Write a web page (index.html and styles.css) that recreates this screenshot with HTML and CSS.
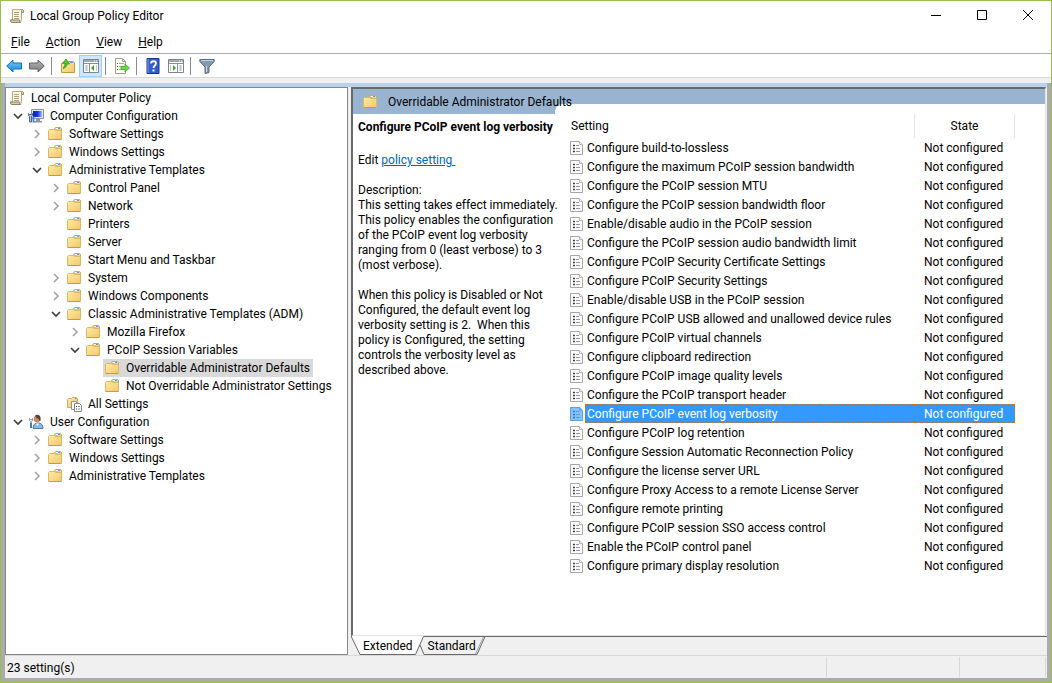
FILE: index.html
```html
<!DOCTYPE html>
<html lang="en">
<head>
<meta charset="utf-8">
<title>Local Group Policy Editor</title>
<link rel="stylesheet" href="styles.css">
</head>
<body>
<svg class="sprites" aria-hidden="true">
  <defs>
    <linearGradient id="gold" x1="0" y1="0" x2="1" y2="1"><stop offset="0" stop-color="#ffeaa6"/><stop offset="1" stop-color="#f0c968"/></linearGradient>
    <linearGradient id="blue" x1="0" y1="0" x2="0" y2="1"><stop offset="0" stop-color="#6fd0fa"/><stop offset="1" stop-color="#1287d8"/></linearGradient>
    <linearGradient id="grey" x1="0" y1="0" x2="0" y2="1"><stop offset="0" stop-color="#b4b4b4"/><stop offset="1" stop-color="#7c7c7c"/></linearGradient>
    <linearGradient id="screen" x1="0" y1="0" x2="1" y2="0"><stop offset="0" stop-color="#0a22b8"/><stop offset=".5" stop-color="#1530e0"/><stop offset="1" stop-color="#9cbcf8"/></linearGradient>
    <symbol id="folder" viewBox="0 0 16 16">
      <path d="M7.500 3.500V2.500l1-1h5l1 1v3z" fill="#f3d27d" stroke="#d0a850"/>
      <path d="M9 2.500h4" stroke="#fff"/><path d="M11 2.500h2" stroke="#4d9be6"/>
      <path d="M1.500 4.500l1-1h5l1 1h6v9h-13z" fill="url(#gold)" stroke="#dcb865"/>
      <path d="M2 13.500h12" stroke="#c69a45"/>
    </symbol>
    <symbol id="scroll" viewBox="0 0 16 16">
      <path d="M3.500 1.500h10l1 1v2h-2v7l-1 3H2.500l-1-1v-1.500h2z" fill="#fbf5dc" stroke="#b5aa86"/>
      <path d="M12.500 4.500V2.500l1-1 1 1v2z" fill="#d9cda4" stroke="#9c9171"/>
      <path d="M1.500 12h9v1.500l1 1H3l-1.500-1z" fill="#d8cda8" stroke="#8f8564"/>
      <path d="M5 4.500h5M5 6.500h5M5 8.500h5M5 10.500h5" stroke="#a7a08a"/>
    </symbol>
    <symbol id="computer" viewBox="0 0 16 16">
      <path d="M3.500 1.500h12v9h-12z" fill="#e3e7ef" stroke="#8691a6"/>
      <path d="M5 3h9v6H5z" fill="url(#screen)"/>
      <path d="M8 11h4v2H8zM6 13h8v1.500H6z" fill="#8b93a1"/>
      <path d="M.5 5.500v2l1 1v5.500h2V8.500l1-1v-2l-1 1h-2z" fill="#a9c8e4" stroke="#4a6788"/>
      <path d="M5.500 8.500v6" stroke="#4e83c2" stroke-width="2"/>
    </symbol>
    <symbol id="user" viewBox="0 0 16 16">
      <path d="M5 14.500c0-4 2-5.500 5-5.500s5 1.500 5 5.500z" fill="#8db7e2" stroke="#4b7bab"/>
      <circle cx="9" cy="5" r="3.300" fill="#c58b68"/>
      <path d="M7 2c1-2 5-2 5.500 1.500V7C11 7.500 11 4 9 4z" fill="#594033"/>
      <path d="M8 9.500l1.500 2.500 1.500-2.500z" fill="#fff"/>
      <path d="M1.500 4.500v2l1 1v1h1v-1l1-1v-2l-1 1h-1z" fill="#e4eef7" stroke="#6f8193" stroke-width=".8"/>
      <path d="M3 9v5" stroke="#477fb8" stroke-width="2"/>
    </symbol>
    <symbol id="all" viewBox="0 0 16 16">
      <path d="M1.500 3.500l1-1h3l1-1h4l1 1v9h-10z" fill="url(#gold)" stroke="#d5ad58"/>
      <path d="M9 2.500h1.500" stroke="#4d9be6"/>
      <path d="M5.500 5.500h5v8h-5z" fill="#fff" stroke="#909090"/>
      <path d="M8.500 7.500h5l2 2v6h-7z" fill="#fff" stroke="#858585"/>
      <path d="M10 10.500h1M10 13h1" stroke="#333"/><path d="M12 10.500h2M12 13h2" stroke="#8d89b0"/>
    </symbol>
    <symbol id="policy" viewBox="0 0 14 16">
      <path d="M.5 1.500h9l3 3v10H.5z" fill="#fff" stroke="#a8a8a8"/>
      <path d="M9.500 1.500v3h3" fill="#f0f0f0" stroke="#b8b8b8"/>
      <path d="M3 5.500h2M3 8.500h2M3 11.500h2" stroke="#38384e" stroke-width="1.500"/>
      <path d="M6 5.500h3M6 8.500h4M6 11.500h4" stroke="#9693b5"/>
    </symbol>
    <symbol id="open" viewBox="0 0 10 10"><path d="M1 3l4 4 4-4" fill="none" stroke="#404040" stroke-width="1.700"/></symbol>
    <symbol id="closed" viewBox="0 0 10 10"><path d="M3 1l4 4-4 4" fill="none" stroke="#a0a0a0" stroke-width="1.500"/></symbol>
  </defs>
</svg>

<div class="window">
  <header class="titlebar">
    <svg class="icon"><use href="#scroll"/></svg>
    <h1 class="title">Local Group Policy Editor</h1>
    <div class="caption-buttons">
      <button class="caption" aria-label="Minimize"><svg class="glyph" viewBox="0 0 11 11"><path d="M0 5.500h10"/></svg></button>
      <button class="caption" aria-label="Maximize"><svg class="glyph" viewBox="0 0 11 11"><path d="M.5.5h9v9H.5z"/></svg></button>
      <button class="caption" aria-label="Close"><svg class="glyph" viewBox="0 0 11 11"><path d="M0 0l10 10M10 0L0 10"/></svg></button>
    </div>
  </header>

  <nav class="menubar">
    <button class="menu"><u>F</u>ile</button>
    <button class="menu"><u>A</u>ction</button>
    <button class="menu"><u>V</u>iew</button>
    <button class="menu"><u>H</u>elp</button>
  </nav>

  <div class="toolbar" role="toolbar">
    <button class="tool" aria-label="Back"><svg class="icon" viewBox="0 0 16 16"><path d="M.7 8L7 2v3h8.500v6H7v3z" fill="url(#blue)" stroke="#1b6eb0"/></svg></button>
    <button class="tool" aria-label="Forward"><svg class="icon" viewBox="0 0 16 16"><path d="M15.300 8L9 2v3H.5v6H9v3z" fill="url(#grey)" stroke="#626262"/></svg></button>
    <span class="divider"></span>
    <button class="tool" aria-label="Up one level"><svg class="icon" viewBox="0 0 16 16"><path d="M1.500 5.500l1-1h5l1-1h5l1 1v10h-13z" fill="url(#gold)" stroke="#c19a45"/><path d="M10 4.500h3" stroke="#4d9be6"/><path d="M3 10.500C6 9.500 7 8 7 6h2.500L6 1 2.500 5.500H5c0 2-1 3-2 5z" fill="#51c432" stroke="#2f8d1c" stroke-width=".7"/></svg></button>
    <button class="tool tool-active" aria-label="Show or hide console tree" aria-pressed="true"><svg class="icon" viewBox="0 0 16 16"><path d="M.5 1.500h15v13H.5z" fill="#fff" stroke="#7d8490"/><path d="M1 2h14v2H1z" fill="#a0a6b0"/><path d="M11 3h1M13 3h1" stroke="#fff"/><path d="M1 5.500h14M6.500 6v8.500" stroke="#8a909b"/><path d="M2.500 8h2M2.500 10h2M2.500 12h2M13 8h1M13 10h1M13 12h1" stroke="#7b86a2"/><path d="M11 7v6l-3-3z" fill="#36a91f"/></svg></button>
    <span class="divider"></span>
    <button class="tool" aria-label="Export list"><svg class="icon" viewBox="0 0 16 16"><path d="M1.500.5h7l3 3v12h-10z" fill="#fffef1" stroke="#a29d8b"/><path d="M8.500.5v3h3" fill="none" stroke="#a29d8b"/><path d="M3 5.500h1M3 8.500h1M3 11.500h1" stroke="#444"/><path d="M5 5.500h5M5 8.500h4M5 11.500h4" stroke="#aaa7be"/><path d="M7 8.500h4V6l4.500 4-4.500 4v-2.500H7z" fill="#6ad848" stroke="#46a62b" stroke-width=".8"/></svg></button>
    <span class="divider"></span>
    <button class="tool" aria-label="Help"><svg class="icon" viewBox="0 0 16 16"><path d="M2 .5h12v15H2z" fill="#315bd0" stroke="#183788"/><path d="M3 1v14" stroke="#7a9cf0"/><path d="M6 5.500c0-3 5-3 5 0 0 2-2.500 2-2.500 4.500" fill="none" stroke="#fff" stroke-width="1.800"/><path d="M7.500 11.500h2v2h-2z" fill="#fff"/></svg></button>
    <button class="tool" aria-label="Show or hide action pane"><svg class="icon" viewBox="0 0 16 16"><path d="M.5 1.500h15v13H.5z" fill="#fff" stroke="#7d8490"/><path d="M1 2h14v2H1z" fill="#a0a6b0"/><path d="M11 3h1M13 3h1" stroke="#fff"/><path d="M1 5.500h14M9.500 6v8.500" stroke="#8a909b"/><path d="M2 8h1M2 10h1M2 12h1M11.500 8h2M11.500 10h2M11.500 12h2" stroke="#7b86a2"/><path d="M5 7v6l3-3z" fill="#36a91f"/></svg></button>
    <span class="divider"></span>
    <button class="tool" aria-label="Filter"><svg class="icon" viewBox="0 0 16 16"><path d="M.8 1.500h14.400v2L10 9v5.500l-4 1V9L.8 3.500z" fill="#8699ad" stroke="#536a80"/><path d="M2 2.500h12" stroke="#c7d4df"/><path d="M7.500 8v6" stroke="#d0dce5"/></svg></button>
  </div>

  <div class="frame">
    <main class="panes">
      <nav class="tree" aria-label="Console tree">
        <ul class="branch">
          <li><div class="node root"><svg class="icon"><use href="#scroll"/></svg><span class="label">Local Computer Policy</span></div></li>
          <li>
            <div class="node"><button class="twisty" aria-label="Collapse"><svg><use href="#open"/></svg></button><svg class="icon"><use href="#computer"/></svg><span class="label">Computer Configuration</span></div>
            <ul class="branch nested">
              <li><div class="node"><button class="twisty" aria-label="Expand"><svg><use href="#closed"/></svg></button><svg class="icon"><use href="#folder"/></svg><span class="label">Software Settings</span></div></li>
              <li><div class="node"><button class="twisty" aria-label="Expand"><svg><use href="#closed"/></svg></button><svg class="icon"><use href="#folder"/></svg><span class="label">Windows Settings</span></div></li>
              <li>
                <div class="node"><button class="twisty" aria-label="Collapse"><svg><use href="#open"/></svg></button><svg class="icon"><use href="#folder"/></svg><span class="label">Administrative Templates</span></div>
                <ul class="branch nested">
                  <li><div class="node"><button class="twisty" aria-label="Expand"><svg><use href="#closed"/></svg></button><svg class="icon"><use href="#folder"/></svg><span class="label">Control Panel</span></div></li>
                  <li><div class="node"><button class="twisty" aria-label="Expand"><svg><use href="#closed"/></svg></button><svg class="icon"><use href="#folder"/></svg><span class="label">Network</span></div></li>
                  <li><div class="node leaf"><svg class="icon"><use href="#folder"/></svg><span class="label">Printers</span></div></li>
                  <li><div class="node leaf"><svg class="icon"><use href="#folder"/></svg><span class="label">Server</span></div></li>
                  <li><div class="node leaf"><svg class="icon"><use href="#folder"/></svg><span class="label">Start Menu and Taskbar</span></div></li>
                  <li><div class="node"><button class="twisty" aria-label="Expand"><svg><use href="#closed"/></svg></button><svg class="icon"><use href="#folder"/></svg><span class="label">System</span></div></li>
                  <li><div class="node"><button class="twisty" aria-label="Expand"><svg><use href="#closed"/></svg></button><svg class="icon"><use href="#folder"/></svg><span class="label">Windows Components</span></div></li>
                  <li>
                    <div class="node"><button class="twisty" aria-label="Collapse"><svg><use href="#open"/></svg></button><svg class="icon"><use href="#folder"/></svg><span class="label">Classic Administrative Templates (ADM)</span></div>
                    <ul class="branch nested">
                      <li><div class="node"><button class="twisty" aria-label="Expand"><svg><use href="#closed"/></svg></button><svg class="icon"><use href="#folder"/></svg><span class="label">Mozilla Firefox</span></div></li>
                      <li>
                        <div class="node"><button class="twisty" aria-label="Collapse"><svg><use href="#open"/></svg></button><svg class="icon"><use href="#folder"/></svg><span class="label">PCoIP Session Variables</span></div>
                        <ul class="branch nested">
                          <li><div class="node leaf"><span class="current"><svg class="icon"><use href="#folder"/></svg><span class="label">Overridable Administrator Defaults</span></span></div></li>
                          <li><div class="node leaf"><svg class="icon"><use href="#folder"/></svg><span class="label">Not Overridable Administrator Settings</span></div></li>
                        </ul>
                      </li>
                    </ul>
                  </li>
                  <li><div class="node leaf"><svg class="icon"><use href="#all"/></svg><span class="label">All Settings</span></div></li>
                </ul>
              </li>
            </ul>
          </li>
          <li>
            <div class="node"><button class="twisty" aria-label="Collapse"><svg><use href="#open"/></svg></button><svg class="icon"><use href="#user"/></svg><span class="label">User Configuration</span></div>
            <ul class="branch nested">
              <li><div class="node"><button class="twisty" aria-label="Expand"><svg><use href="#closed"/></svg></button><svg class="icon"><use href="#folder"/></svg><span class="label">Software Settings</span></div></li>
              <li><div class="node"><button class="twisty" aria-label="Expand"><svg><use href="#closed"/></svg></button><svg class="icon"><use href="#folder"/></svg><span class="label">Windows Settings</span></div></li>
              <li><div class="node"><button class="twisty" aria-label="Expand"><svg><use href="#closed"/></svg></button><svg class="icon"><use href="#folder"/></svg><span class="label">Administrative Templates</span></div></li>
            </ul>
          </li>
        </ul>
      </nav>

      <section class="result">
        <div class="sheet">
          <div class="banner">
            <div class="banner-tab"><svg class="icon"><use href="#folder"/></svg><h2 class="banner-title">Overridable Administrator Defaults</h2></div>
            <div class="banner-cut"></div>
          </div>
          <div class="columns">
            <article class="details">
              <h3 class="details-title">Configure PCoIP event log verbosity</h3>
              <p class="text">Edit <a class="link" href="#policy-setting">policy setting&nbsp;</a></p>
              <p class="text">Description:<br>This setting takes effect immediately.<br>This policy enables the configuration<br>of the PCoIP event log verbosity<br>ranging from 0 (least verbose) to 3<br>(most verbose).</p>
              <p class="text">When this policy is Disabled or Not<br>Configured, the default event log<br>verbosity setting is 2.&nbsp; When this<br>policy is Configured, the setting<br>controls the verbosity level as<br>described above.</p>
            </article>
            <div class="list">
              <table class="settings">
                <colgroup><col class="col-mark"><col><col class="col-state"></colgroup>
                <thead><tr><th class="name" colspan="2" scope="col">Setting</th><th class="state" scope="col">State</th></tr></thead>
                <tbody>
                  <tr><td class="mark"><svg><use href="#policy"/></svg></td><td class="name">Configure build-to-lossless</td><td class="state">Not configured</td></tr>
                  <tr><td class="mark"><svg><use href="#policy"/></svg></td><td class="name">Configure the maximum PCoIP session bandwidth</td><td class="state">Not configured</td></tr>
                  <tr><td class="mark"><svg><use href="#policy"/></svg></td><td class="name">Configure the PCoIP session MTU</td><td class="state">Not configured</td></tr>
                  <tr><td class="mark"><svg><use href="#policy"/></svg></td><td class="name">Configure the PCoIP session bandwidth floor</td><td class="state">Not configured</td></tr>
                  <tr><td class="mark"><svg><use href="#policy"/></svg></td><td class="name">Enable/disable audio in the PCoIP session</td><td class="state">Not configured</td></tr>
                  <tr><td class="mark"><svg><use href="#policy"/></svg></td><td class="name">Configure the PCoIP session audio bandwidth limit</td><td class="state">Not configured</td></tr>
                  <tr><td class="mark"><svg><use href="#policy"/></svg></td><td class="name">Configure PCoIP Security Certificate Settings</td><td class="state">Not configured</td></tr>
                  <tr><td class="mark"><svg><use href="#policy"/></svg></td><td class="name">Configure PCoIP Security Settings</td><td class="state">Not configured</td></tr>
                  <tr><td class="mark"><svg><use href="#policy"/></svg></td><td class="name">Enable/disable USB in the PCoIP session</td><td class="state">Not configured</td></tr>
                  <tr><td class="mark"><svg><use href="#policy"/></svg></td><td class="name">Configure PCoIP USB allowed and unallowed device rules</td><td class="state">Not configured</td></tr>
                  <tr><td class="mark"><svg><use href="#policy"/></svg></td><td class="name">Configure PCoIP virtual channels</td><td class="state">Not configured</td></tr>
                  <tr><td class="mark"><svg><use href="#policy"/></svg></td><td class="name">Configure clipboard redirection</td><td class="state">Not configured</td></tr>
                  <tr><td class="mark"><svg><use href="#policy"/></svg></td><td class="name">Configure PCoIP image quality levels</td><td class="state">Not configured</td></tr>
                  <tr><td class="mark"><svg><use href="#policy"/></svg></td><td class="name">Configure the PCoIP transport header</td><td class="state">Not configured</td></tr>
                  <tr class="selected"><td class="mark"><svg viewBox="0 0 14 16"><use href="#policy"/><path d="M0 1h10l3 3v11H0z" fill="#3399ff" fill-opacity=".6"/></svg></td><td class="name">Configure PCoIP event log verbosity</td><td class="state">Not configured</td></tr>
                  <tr><td class="mark"><svg><use href="#policy"/></svg></td><td class="name">Configure PCoIP log retention</td><td class="state">Not configured</td></tr>
                  <tr><td class="mark"><svg><use href="#policy"/></svg></td><td class="name">Configure Session Automatic Reconnection Policy</td><td class="state">Not configured</td></tr>
                  <tr><td class="mark"><svg><use href="#policy"/></svg></td><td class="name">Configure the license server URL</td><td class="state">Not configured</td></tr>
                  <tr><td class="mark"><svg><use href="#policy"/></svg></td><td class="name">Configure Proxy Access to a remote License Server</td><td class="state">Not configured</td></tr>
                  <tr><td class="mark"><svg><use href="#policy"/></svg></td><td class="name">Configure remote printing</td><td class="state">Not configured</td></tr>
                  <tr><td class="mark"><svg><use href="#policy"/></svg></td><td class="name">Configure PCoIP session SSO access control</td><td class="state">Not configured</td></tr>
                  <tr><td class="mark"><svg><use href="#policy"/></svg></td><td class="name">Enable the PCoIP control panel</td><td class="state">Not configured</td></tr>
                  <tr><td class="mark"><svg><use href="#policy"/></svg></td><td class="name">Configure primary display resolution</td><td class="state">Not configured</td></tr>
                </tbody>
              </table>
            </div>
          </div>
        </div>
        <div class="tabs" role="tablist">
          <svg class="tab-shapes" viewBox="0 0 150 19" aria-hidden="true">
            <path d="M0 0h72l-8 18.500H9z" fill="#fff"/>
            <path d="M.5 0v1L9 18.500h55.500L72.500.5" fill="none" stroke="#696969"/>
            <path d="M69 9l4 9.500h53L134 .5" fill="none" stroke="#696969"/>
            <path d="M72.500.5H150" stroke="#696969"/>
            <path d="M124.500 18L132.500 1" stroke="#a0a0a0"/>
          </svg>
          <button class="tab" role="tab" aria-selected="true">Extended</button>
          <button class="tab" role="tab" aria-selected="false">Standard</button>
          <span class="tab-rule"></span>
        </div>
      </section>
    </main>
    <footer class="status">
      <span class="status-text">23 setting(s)</span>
      <span class="status-cell status-wide"></span>
      <span class="status-cell"></span>
    </footer>
  </div>
</div>
</body>
</html>
```

FILE: styles.css
```css
* { box-sizing: border-box; }

body {
  margin: 0;
  font-family: Roboto, "Open Sans", sans-serif;
  font-size: 12px;
  line-height: 15px;
  color: #000;
}

h1, h2, h3, p, ul { margin: 0; padding: 0; font-size: inherit; font-weight: normal; }
ul { list-style: none; }
button { margin: 0; padding: 0; border: 0; background: none; font: inherit; color: inherit; }
svg { display: block; flex: none; }

.sprites { position: absolute; width: 0; height: 0; }
.icon { width: 16px; height: 16px; }

.window {
  display: flex;
  flex-direction: column;
  min-height: 100vh;
  border: 1px solid #96bf4b;
  background: #fff;
}

.titlebar { display: flex; align-items: center; height: 29px; padding-left: 8px; }
.title { flex: 1; padding: 2px 0 0 5px; }
.caption-buttons { display: flex; }
.caption { display: grid; place-items: center; width: 46px; height: 29px; }
.glyph { width: 11px; height: 11px; fill: none; stroke: #000; }

.menubar { display: flex; gap: 16px; height: 24px; padding-left: 10px; border-bottom: 1px solid #aaaab4; }
.menu { height: 23px; padding-top: 2px; }

.toolbar { display: flex; align-items: center; height: 24px; padding-left: 1px; border-bottom: 1px solid #d9d9d9; }
.tool { display: grid; place-items: center; width: 23px; height: 22px; }
.tool-active { background: #cce8ff; border: 1px solid #99d1ff; }
.divider { width: 1px; height: 18px; margin: 0 4px 0 3px; background: #8c8c8c; }

.frame {
  flex: 1;
  display: flex;
  flex-direction: column;
  margin-top: 5px;
  border: solid #ababab;
  border-width: 0 4px 4px;
  background: #f0f0f0;
  box-shadow: 0 -5px #f0f0f0;
}

.panes {
  flex: 1;
  display: grid;
  grid-template-columns: 343px minmax(0, 1fr);
  gap: 3px;
  border-top: 4px solid #b9d1ea;
}

.tree { padding: 1px 0 0 3px; border: 1px solid #828790; background: #fff; }
.nested { padding-left: 19px; }
.node { display: flex; align-items: center; height: 18px; padding-left: 3px; white-space: nowrap; }
.root { padding-left: 0; }
.leaf { padding-left: 19px; }
.twisty { width: 16px; height: 18px; padding-left: 1px; }
.twisty svg { width: 10px; height: 10px; }
.label { padding-left: 6px; }
.current { display: flex; align-items: center; height: 18px; margin-left: -1px; padding: 0 3px 0 1px; background: #d9d9d9; }

.result { display: flex; flex-direction: column; }
.sheet {
  flex: 1;
  display: flex;
  flex-direction: column;
  margin-right: 1px;
  border: 2px solid #696969;
  border-right: 1px solid #e3e3e3;
  border-bottom: 1px solid #e3e3e3;
  background: #fff;
}

.banner { display: flex; height: 25px; background: #99b4d1; }
.banner-tab {
  position: relative;
  z-index: 1;
  display: flex;
  align-items: center;
  width: 202px;
  padding-left: 9px;
  white-space: nowrap;
}
.banner-title { padding: 2px 0 0 10px; }
.banner-cut { flex: 1; align-self: flex-end; height: 10px; background: #fff; border-top-left-radius: 6px 9px; }

.columns { flex: 1; display: grid; grid-template-columns: 216px minmax(0, 1fr); }
.details { display: flex; flex-direction: column; gap: 15px; padding: 6px 0 0 5px; white-space: nowrap; }
.details-title { height: 18px; font-weight: bold; }
.link { color: #0066cc; }

.list { padding-right: 30px; }
.settings { width: 100%; border-collapse: separate; border-spacing: 0; table-layout: fixed; }
.col-mark { width: 16px; }
.col-state { width: 100px; }
.settings th { height: 24px; padding: 0; border-right: 1px solid #e5e5e5; font-weight: normal; text-align: left; }
.settings th.name { padding-left: 2px; }
.settings th.state { text-align: center; }
.settings td { height: 19px; padding: 0; white-space: nowrap; }
.mark svg { width: 14px; height: 16px; margin-left: 1px; }
.settings td.name { padding: 2px 0 0 2px; }
.settings td.state { padding: 2px 0 0 9px; }
.selected .name, .selected .state { background: #3399ff; color: #fff; border: 1px dashed #c8721e; }
.settings .selected td.name { padding: 2px 0 0 1px; border-right: 0; }
.settings .selected .state { border-left: 0; }
.settings .selected td { line-height: 13px; }

.tabs { position: relative; display: flex; align-items: stretch; height: 19px; padding-left: 12px; gap: 15px; }
.tab-shapes { position: absolute; left: 0; top: 0; width: 150px; height: 19px; }
.tab { position: relative; padding-top: 1px; }
.tab-rule { flex: 1; border-top: 1px solid #696969; }

.status { display: flex; align-items: center; height: 23px; padding-right: 1px; border-top: 1px solid #d7d7d7; }
.status-text { flex: 1; padding: 2px 0 0 2px; }
.status-cell { width: 87px; height: 20px; border: solid #d7d7d7; border-width: 0 1px 0 1px; }
.status-wide { width: 133px; border-right: 0; }
```
